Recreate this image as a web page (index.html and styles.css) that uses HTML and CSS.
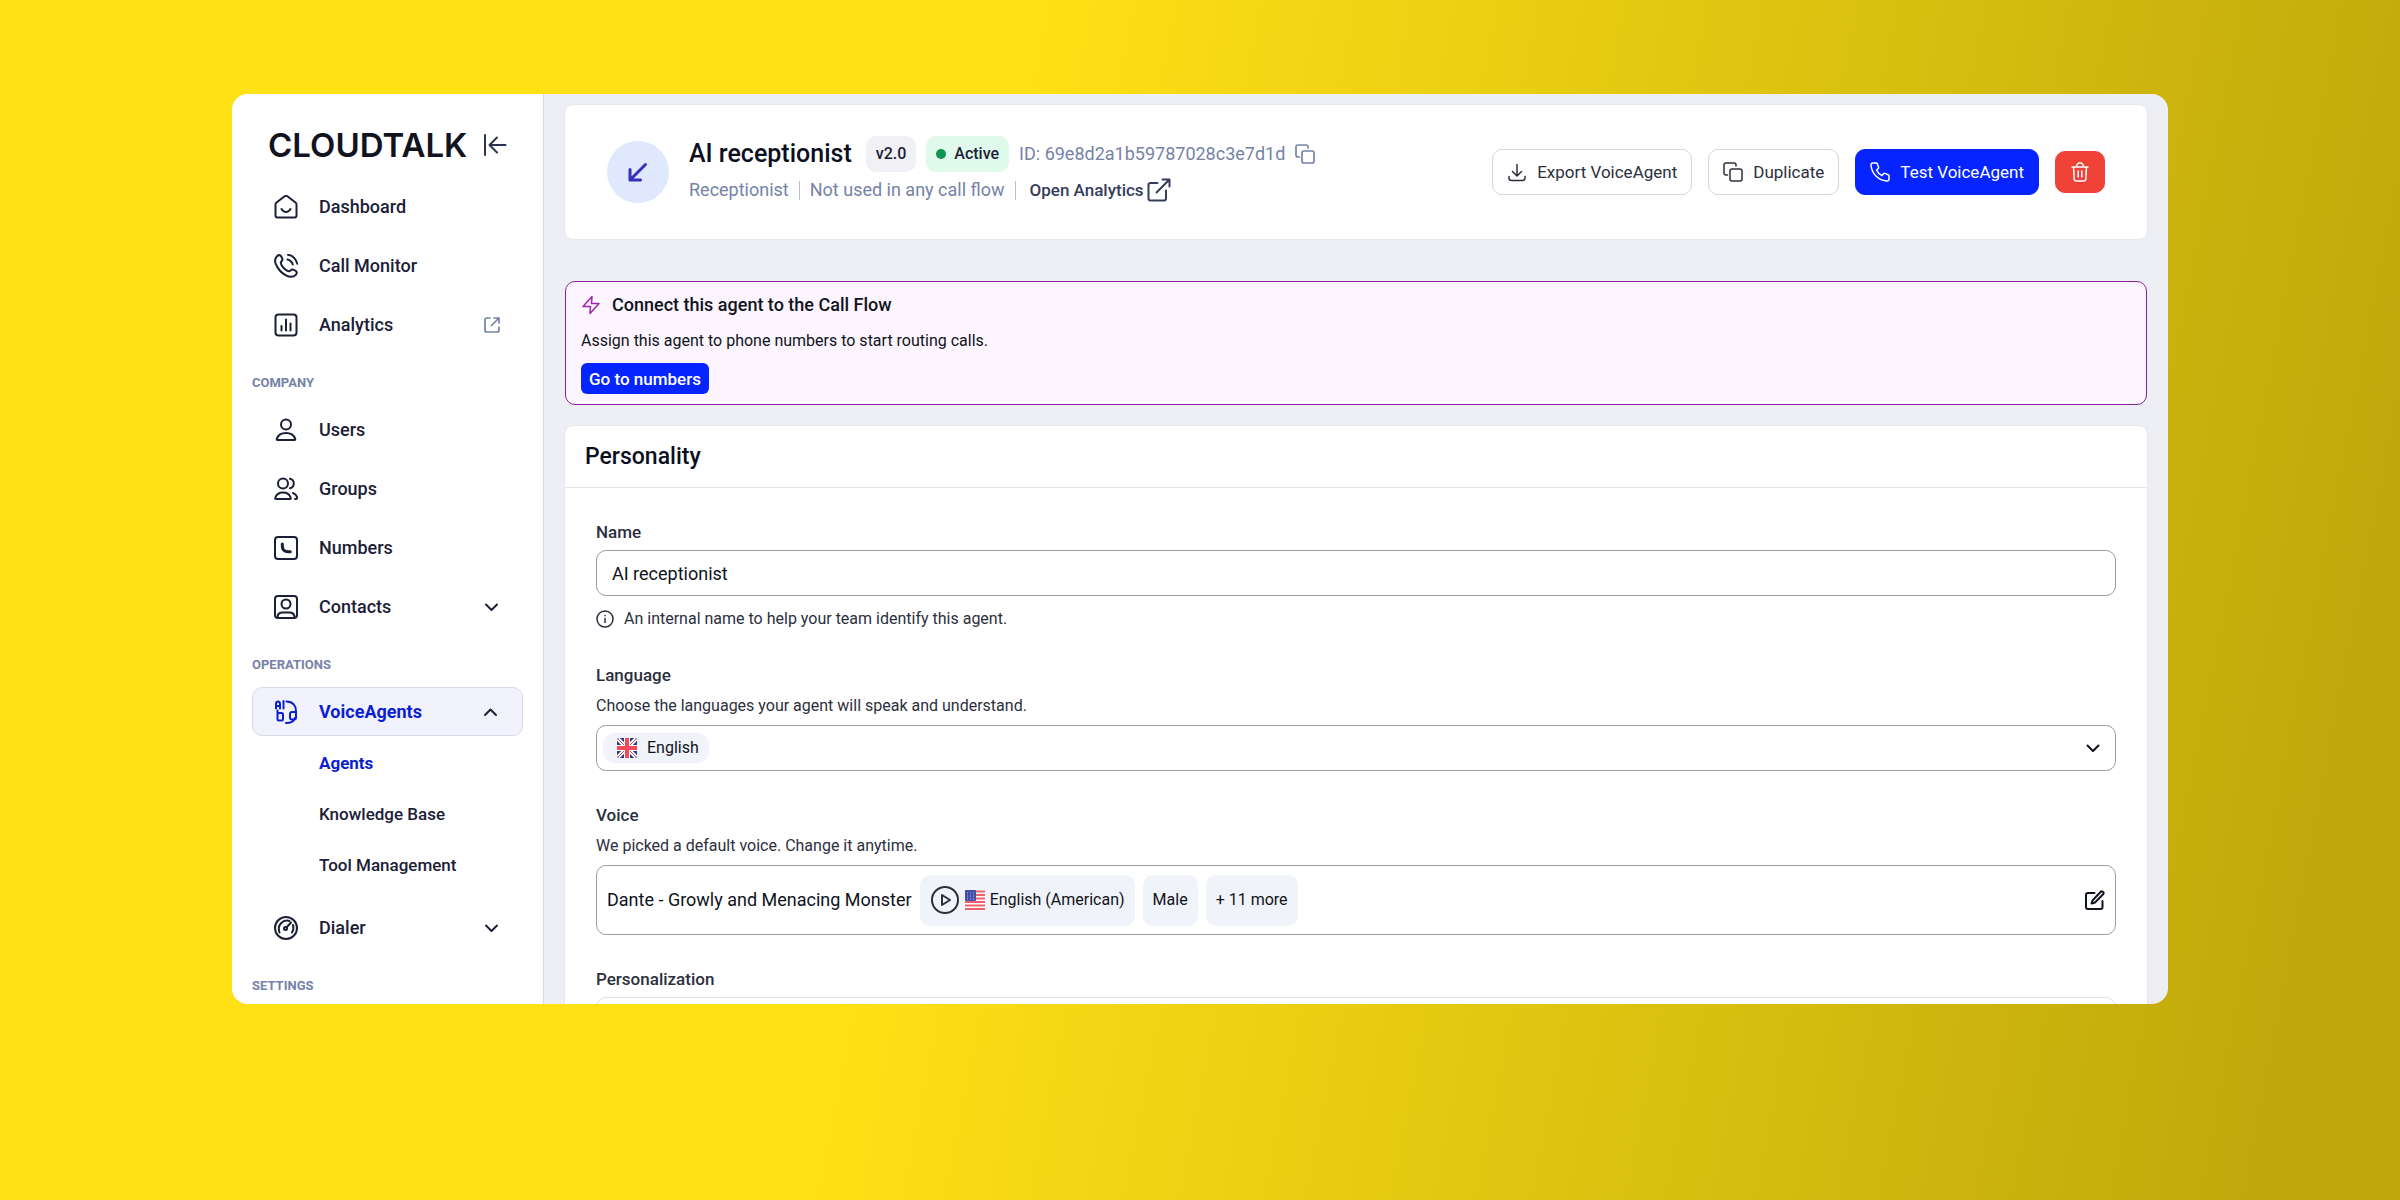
FILE: index.html
```html
<!DOCTYPE html>
<html lang="en">
<head>
<meta charset="utf-8">
	<title>AI receptionist - VoiceAgents</title>
	<link rel="stylesheet" href="styles.css">
</head>
<body>
<div class="window">
	<aside class="sidebar">
		<div class="brand">
			<a href="#" class="logo">CLOUDTALK</a>
			<button type="button" class="icon-btn" aria-label="Collapse menu">
				<svg width="24" height="24" viewBox="0 0 24 24"><path d="M2 2v20M22.500 12H7M14 4.500L6.500 12l7.500 7.500"/></svg>
			</button>
		</div>
		<nav>
			<ul class="menu">
				<li><a href="#" class="item">
					<svg width="24" height="24" viewBox="0 0 24 24"><path d="M1.500 9.500Q1.500 8.300 2.500 7.500L10.600 1.300Q12 .3 13.400 1.300L21.500 7.500q1 .8 1 2V20.500a2 2 0 0 1-2 2h-17a2 2 0 0 1-2-2zM7.500 14q1.800 3 4.500 3t4.500-3"/></svg>
					<span>Dashboard</span>
				</a></li>
				<li><a href="#" class="item">
					<svg width="24" height="24" viewBox="0 0 24 24"><path d="M3 2.200C5.500-.2 7.200 1.800 8.300 4.500c1 2.300-1.900 2.900-1.500 4.700.6 3 4.500 7 7.700 8 1.900.5 2.300-2.300 4.600-1.600 2.900 1 5 2.600 2.700 5.200-2.300 2.500-5.800 2.700-10.300.3C7.500 19 4 14.800 2 10.500.6 7.300.9 4.300 3 2.200zM13.500 5.500q4 .8 5.300 5M14 .8q7 1 9.300 9"/></svg>
					<span>Call Monitor</span>
				</a></li>
				<li><a href="#" class="item">
					<svg width="24" height="24" viewBox="0 0 24 24"><rect x="1.500" y="1.500" width="21" height="21" rx="3"/><path d="M7.500 13v4.500M12 6.500v11M16.500 10.500v7"/></svg>
					<span>Analytics</span>
					<svg class="end muted" width="18" height="18" viewBox="0 0 18 18"><path d="M7 2H4a2 2 0 0 0-2 2v10a2 2 0 0 0 2 2h10a2 2 0 0 0 2-2v-3M11 2h5v5M16 2L8.500 9.500"/></svg>
				</a></li>
				<li class="section">COMPANY</li>
				<li><a href="#" class="item">
					<svg width="24" height="24" viewBox="0 0 24 24"><circle cx="12" cy="6.500" r="5"/><path d="M3.500 22Q2.500 22 2.800 20.800 4.800 15 12 15t9.200 5.800Q21.500 22 20.500 22z"/></svg>
					<span>Users</span>
				</a></li>
				<li><a href="#" class="item">
					<svg width="24" height="24" viewBox="0 0 24 24"><circle cx="9" cy="6.500" r="5"/><path d="M2 22Q1 22 1.300 20.800 3 15.500 9 15.500t7.700 5.300Q17 22 16 22zM16 1.800c5 1 5 8.400 0 9.400M19 16q3.500 1.500 4.200 4.500.3 1.500-2.200 1.500"/></svg>
					<span>Groups</span>
				</a></li>
				<li><a href="#" class="item">
					<svg width="24" height="24" viewBox="0 0 24 24"><rect x="1" y="1" width="22" height="22" rx="3"/><path class="bold" d="M8.300 8v2q0 5.700 6 5.700h2"/></svg>
					<span>Numbers</span>
				</a></li>
				<li><a href="#" class="item">
					<svg width="24" height="24" viewBox="0 0 24 24"><rect x="1" y="1" width="22" height="22" rx="3"/><circle cx="12" cy="9" r="4.500"/><path d="M3.500 22q.3-4.500 5-4.500h7q4.700 0 5 4.500"/></svg>
					<span>Contacts</span>
					<svg class="end" width="18" height="16" viewBox="0 0 18 16"><path d="M3 5.500L8.500 11 14 5.500"/></svg>
				</a></li>
				<li class="section">OPERATIONS</li>
				<li>
					<a href="#" class="item active">
						<svg width="24" height="24" viewBox="0 0 24 24"><path d="M2 8.500V4q0-2.500 2-2.500T6 4v4.500M2 6h4M9.500 1v7.500M3.500 10.500V19q0 1.500 1.500 1.500h2.500Q9 20.500 9 19v-4.500q0-1.500-1.500-1.500h-4M12.500 1.500C19 1.500 22 6 22 11v6.500q0 2-2 2h-2q-2 0-2-2V14q0-2 2-2h4M21 18c-1 4-5 5-9 5"/></svg>
						<span>VoiceAgents</span>
						<svg class="end" width="18" height="16" viewBox="0 0 18 16"><path d="M2 11l5.500-5.500L13 11"/></svg>
					</a>
					<ul class="submenu">
						<li><a href="#" class="current">Agents</a></li>
						<li><a href="#">Knowledge Base</a></li>
						<li><a href="#">Tool Management</a></li>
					</ul>
				</li>
				<li><a href="#" class="item">
					<svg width="24" height="24" viewBox="0 0 24 24"><circle cx="12" cy="12" r="11"/><path d="M5.500 16.500Q3.500 11 7 7.300T15.500 5M19 9q1.200 4-1 7.500M12.500 11.500L17 6.500"/><circle class="bold" cx="11.500" cy="12.500" r="1"/></svg>
					<span>Dialer</span>
					<svg class="end" width="18" height="16" viewBox="0 0 18 16"><path d="M3 5.500L8.500 11 14 5.500"/></svg>
				</a></li>
				<li class="section">SETTINGS</li>
			</ul>
		</nav>
	</aside>

	<main class="content">
		<header class="card agent">
			<div class="avatar">
				<svg width="24" height="24" viewBox="0 0 24 24"><path d="M19.500 4.500L4 20M4 9.500V20h10.500"/></svg>
			</div>
			<div class="info">
				<div class="row">
					<h1>AI receptionist</h1>
					<span class="badge">v2.0</span>
					<span class="badge green"><i class="dot"></i>Active</span>
					<span class="id">ID: 69e8d2a1b59787028c3e7d1d</span>
					<button type="button" class="icon-btn muted" aria-label="Copy ID">
						<svg width="20" height="20" viewBox="0 0 20 20"><rect x="7" y="7" width="12" height="12" rx="2"/><path d="M4.500 13H3a2 2 0 0 1-2-2V3a2 2 0 0 1 2-2h8a2 2 0 0 1 2 2v1"/></svg>
					</button>
				</div>
				<div class="row meta">
					<span>Receptionist</span>
					<span class="sep"></span>
					<span>Not used in any call flow</span>
					<span class="sep"></span>
					<a href="#">Open Analytics
						<svg width="24" height="24" viewBox="0 0 24 24"><path d="M10.500 5H3.500a2 2 0 0 0-2 2v13.500a2 2 0 0 0 2 2H17a2 2 0 0 0 2-2v-8M15.500 1.500h7v7M22.500 1.500L9.500 14.500"/></svg>
					</a>
				</div>
			</div>
			<div class="actions">
				<button type="button" class="btn">
					<svg width="20" height="20" viewBox="0 0 20 20"><path d="M10 2.500V14M5.500 9.500L10 14l4.500-4.500M2 14.500V16q0 2.500 2.500 2.500h11q2.500 0 2.500-2.500v-1.500"/></svg>
					Export VoiceAgent
				</button>
				<button type="button" class="btn">
					<svg width="20" height="20" viewBox="0 0 20 20"><rect x="7" y="7" width="12" height="12" rx="2"/><path d="M4.500 13H3a2 2 0 0 1-2-2V3a2 2 0 0 1 2-2h8a2 2 0 0 1 2 2v1"/></svg>
					Duplicate
				</button>
				<button type="button" class="btn primary">
					<svg width="20" height="20" viewBox="0 0 20 20"><path d="M3 1h3.200q.8 0 1.100.8l1.300 3.400q.3.8-.4 1.300L6.500 8q1.500 3.700 5.500 5.500l1.500-1.700q.5-.7 1.300-.4l3.400 1.300q.8.300.8 1.100V17q0 2-2 2C8.500 18.500 1.500 11.500 1 3q0-2 2-2z"/></svg>
					Test VoiceAgent
				</button>
				<button type="button" class="btn danger" aria-label="Delete">
					<svg width="20" height="20" viewBox="0 0 20 20"><path d="M2 5h16M3.500 5l.7 12q.1 2 2 2h7.600q1.900 0 2-2l.7-12M6.500 5q0-4 3.500-4t3.500 4M8.200 9v6M11.800 9v6"/></svg>
				</button>
			</div>
		</header>

		<section class="notice">
			<h2>
				<svg width="20" height="20" viewBox="0 0 20 20"><path d="M11 1.500L2 11.500h7.500L9 18.500l9-10h-7.500z"/></svg>
				Connect this agent to the Call Flow
			</h2>
			<p>Assign this agent to phone numbers to start routing calls.</p>
			<button type="button" class="btn-small">Go to numbers</button>
		</section>

		<section class="card personality">
			<h2>Personality</h2>
			<form class="form">
				<div class="field">
					<label for="name">Name</label>
					<input type="text" id="name" class="control" value="AI receptionist">
					<p class="hint">
						<svg width="18" height="18" viewBox="0 0 18 18"><circle cx="9" cy="9" r="8"/><path d="M9 8.500v4M9 5.500v.3"/></svg>
						An internal name to help your team identify this agent.
					</p>
				</div>
				<div class="field">
					<label for="language">Language</label>
					<p class="desc">Choose the languages your agent will speak and understand.</p>
					<div class="control picker">
						<span class="chip">
							<svg class="flag" width="20" height="20" viewBox="0 0 20 20">
								<rect width="20" height="20" rx="2" fill="#2b3a8c"/>
								<path d="M1 1l18 18M19 1L1 19" stroke="#fff" stroke-width="4"/>
								<path d="M1 1l18 18M19 1L1 19" stroke="#e8465a" stroke-width="1"/>
								<path d="M10 0v20M0 10h20" stroke="#fff" stroke-width="6"/>
								<path d="M10 0v20M0 10h20" stroke="#f04a5c" stroke-width="4"/>
							</svg>
						</span>
						<select id="language"><option>English</option></select>
						<svg class="caret" width="16" height="16" viewBox="0 0 16 16"><path d="M2.500 5.500L8 11l5.500-5.500"/></svg>
					</div>
				</div>
				<div class="field">
					<span class="label">Voice</span>
					<p class="desc">We picked a default voice. Change it anytime.</p>
					<div class="control voice">
						<span class="voice-name">Dante - Growly and Menacing Monster</span>
						<span class="tag">
							<button type="button" class="icon-btn play" aria-label="Play sample">
								<svg width="30" height="30" viewBox="0 0 30 30"><circle cx="15" cy="15" r="13"/><path d="M12 10v10l8-5z"/></svg>
							</button>
							<svg class="flag" width="20" height="20" viewBox="0 0 20 20">
								<rect width="20" height="20" rx="2" fill="#fff"/>
								<path d="M0 1.500h20M0 5h20M0 8.500h20M0 12h20M0 15.500h20M0 19h20" stroke="#f0606c" stroke-width="2"/>
								<rect width="11" height="11" rx="1" fill="#4450a8"/>
								<path d="M2 3h8M2 6h8M2 9h8" stroke="#aab2e0" stroke-width="1" stroke-dasharray="1 2"/>
							</svg>
							English (American)
						</span>
						<span class="tag">Male</span>
						<span class="tag">+ 11 more</span>
						<button type="button" class="icon-btn edit" aria-label="Change voice">
							<svg width="20" height="20" viewBox="0 0 20 20"><path d="M9.500 3H3a2 2 0 0 0-2 2v12a2 2 0 0 0 2 2h12.500a2 2 0 0 0 2-2v-6M7.500 10.500l8-8.500q1-1.200 2.400-.2t.2 2.500L10 12.500 6.500 13.500z"/></svg>
						</button>
					</div>
				</div>
				<div class="field">
					<label for="personalization">Personalization</label>
					<textarea id="personalization" class="control light"></textarea>
				</div>
			</form>
		</section>
	</main>
</div>
</body>
</html>
```
FILE: styles.css
```css
*{
	box-sizing: border-box;
	margin: 0;
	padding: 0;
}
body{
	height: 100vh;
	padding: 94px 232px 196px;
	background: linear-gradient(101deg,#ffe116 39%,#bfa80b 95%);
	font-family: Roboto,"Liberation Sans",sans-serif;
	font-size: 16px;
	line-height: 24px;
	color: #1b2037;
}
ul{
	list-style: none;
}
a{
	color: inherit;
	text-decoration: none;
}
button,input,select,textarea{
	font: inherit;
	color: inherit;
}
button{
	cursor: pointer;
}
svg{
	flex: none;
	fill: none;
	stroke: currentColor;
	stroke-width: 2;
	stroke-linecap: round;
	stroke-linejoin: round;
}
.bold{
	stroke-width: 3;
}
.window{
	display: flex;
	height: 100%;
	border-radius: 16px;
	background: #eeeff4;
	overflow: hidden;
}
.icon-btn{
	display: flex;
	border: 0;
	background: none;
}
.muted{
	color: #7682a8;
}
.icon-btn.muted svg,.end.muted{
	stroke-width: 1.7;
}

/* sidebar */
.sidebar{
	flex: none;
	width: 312px;
	padding: 32px 20px 0;
	border-right: 1px solid #d9dade;
	background: #fff;
}
.brand{
	display: flex;
	align-items: center;
	justify-content: space-between;
	height: 38px;
	padding: 0 16px;
	color: #11131f;
}
.logo{
	font-family: Inter,sans-serif;
	font-size: 33px;
	font-weight: 600;
	line-height: 38px;
}
.brand svg{
	color: #2b3252;
}
.item{
	display: flex;
	align-items: center;
	height: 49px;
	margin-top: 10px;
	padding: 0 21px;
	border: 1px solid transparent;
	border-radius: 10px;
	font-size: 18px;
	font-weight: 500;
}
.brand + nav{
	padding-top: 8px;
}
.item span{
	margin-left: 21px;
}
.end{
	margin-left: auto;
}
.item.active{
	border-color: #d8daea;
	background: #f2f2ff;
	color: #0b1fd0;
	font-weight: 700;
}
.item.active .end{
	color: #1b2037;
}
.submenu{
	padding: 2px 0;
}
.submenu a{
	display: block;
	padding-left: 67px;
	font-size: 17px;
	font-weight: 500;
	line-height: 51px;
}
.submenu .current{
	color: #0b1fd0;
	font-weight: 700;
}
.section{
	padding-top: 22px;
	font-size: 13px;
	font-weight: 700;
	line-height: 24px;
	color: #7682a8;
}

/* content */
.content{
	flex: 1;
	min-width: 0;
	padding: 11px 21px 0;
}
.card{
	border-radius: 8px;
	background: #fff;
	box-shadow: 0 0 2px rgba(30,35,60,0.12);
}
.agent{
	display: flex;
	align-items: center;
	height: 134px;
	padding: 0 42px;
}
.avatar{
	display: flex;
	align-items: center;
	justify-content: center;
	width: 62px;
	height: 62px;
	border-radius: 50%;
	background: #dfe8fc;
	color: #3730b8;
}
.avatar svg{
	stroke-width: 3;
}
.info{
	margin-left: 20px;
}
.row{
	display: flex;
	align-items: center;
	height: 36px;
	white-space: nowrap;
}
h1{
	margin-right: 4px;
	font-size: 25px;
	font-weight: 500;
	color: #0c0f1d;
}
.badge{
	display: flex;
	align-items: center;
	height: 36px;
	margin-left: 10px;
	padding: 0 10px;
	border-radius: 10px;
	background: #f0f0f5;
	font-weight: 500;
}
.badge.green{
	background: #dffaea;
}
.dot{
	width: 10px;
	height: 10px;
	margin-right: 8px;
	border-radius: 50%;
	background: #0f9353;
}
.id{
	margin: 0 10px;
	font-size: 18px;
	color: #7682a8;
}
.meta{
	font-size: 18px;
	color: #7682a8;
}
.sep{
	width: 1px;
	height: 19px;
	margin: 0 10px;
	background: #b9bfd3;
}
.meta a{
	display: flex;
	align-items: center;
	gap: 3px;
	margin-left: 4px;
	font-size: 17px;
	font-weight: 500;
	color: #363d5c;
}
.actions{
	display: flex;
	align-items: center;
	gap: 16px;
	margin-left: auto;
}
.btn{
	display: flex;
	align-items: center;
	gap: 10px;
	height: 46px;
	padding: 0 14px;
	border: 1px solid #d3d4d8;
	border-radius: 10px;
	background: #fff;
	font-size: 17px;
	white-space: nowrap;
	color: #2c2f3d;
}
.btn.primary{
	border-color: #0524ff;
	background: #0524ff;
	color: #fff;
}
.btn.danger{
	height: 42px;
	border-color: #ef4136;
	background: #ef4136;
	color: #fff;
}
.btn svg,.notice svg,.hint svg{
	stroke-width: 1.5;
}

.notice{
	margin-top: 42px;
	padding: 11px 15px 10px;
	border: 1px solid #86239a;
	border-radius: 10px;
	background: #fcf5ff;
	color: #101320;
}
.notice h2{
	display: flex;
	align-items: center;
	gap: 11px;
	font-size: 18px;
	font-weight: 500;
}
.notice h2 svg{
	color: #9c27b0;
}
.notice p{
	margin: 12px 0 10px;
}
.btn-small{
	display: block;
	height: 31px;
	padding: 0 8px;
	border: 0;
	border-radius: 6px;
	background: #0524ff;
	font-size: 17px;
	font-weight: 500;
	color: #fff;
}

.personality{
	margin-top: 21px;
}
.personality h2{
	padding: 0 20px;
	border-bottom: 1px solid #e3e4e8;
	font-size: 23px;
	font-weight: 500;
	line-height: 61px;
	color: #0c0f1d;
}
.form{
	padding: 32px 31px;
}
.field{
	margin-bottom: 32px;
	color: #2c2f3d;
}
.field label,.label{
	display: block;
	font-size: 17px;
	font-weight: 500;
}
.desc{
	margin: 7px 0;
}
.control{
	display: block;
	width: 100%;
	height: 46px;
	border: 1px solid #9a9ca5;
	border-radius: 10px;
	background: #fff;
	color: #101320;
}
input.control{
	margin-top: 6px;
	padding: 0 15px;
	font-size: 18px;
}
.hint{
	display: flex;
	align-items: center;
	gap: 10px;
	margin: 11px 0 13px;
}
.picker{
	display: grid;
	grid-template-columns: 1fr 16px;
	align-items: center;
	padding: 0 14px 0 6px;
}
.picker .chip,.picker select{
	grid-area: 1 / 1;
}
.chip{
	display: flex;
	align-items: center;
	width: 106px;
	height: 30px;
	padding-left: 14px;
	border-radius: 12px;
	background: #f0f3f9;
}
.picker select{
	z-index: 1;
	width: 100%;
	height: 44px;
	padding-left: 44px;
	border: 0;
	background: none;
	appearance: none;
}
.flag{
	stroke: none;
	stroke-linecap: butt;
}
.voice{
	display: flex;
	align-items: center;
	gap: 8px;
	height: 70px;
	padding: 0 10px;
}
.voice-name{
	font-size: 18px;
}
.tag{
	display: flex;
	align-items: center;
	gap: 5px;
	height: 51px;
	padding: 0 10px;
	border-radius: 10px;
	background: #f0f3f9;
}
.play{
	color: #2c2f3d;
}
.edit{
	margin-left: auto;
}
.light{
	height: 120px;
	margin-top: 6px;
	border-color: #dfe0e5;
	resize: none;
}
```
